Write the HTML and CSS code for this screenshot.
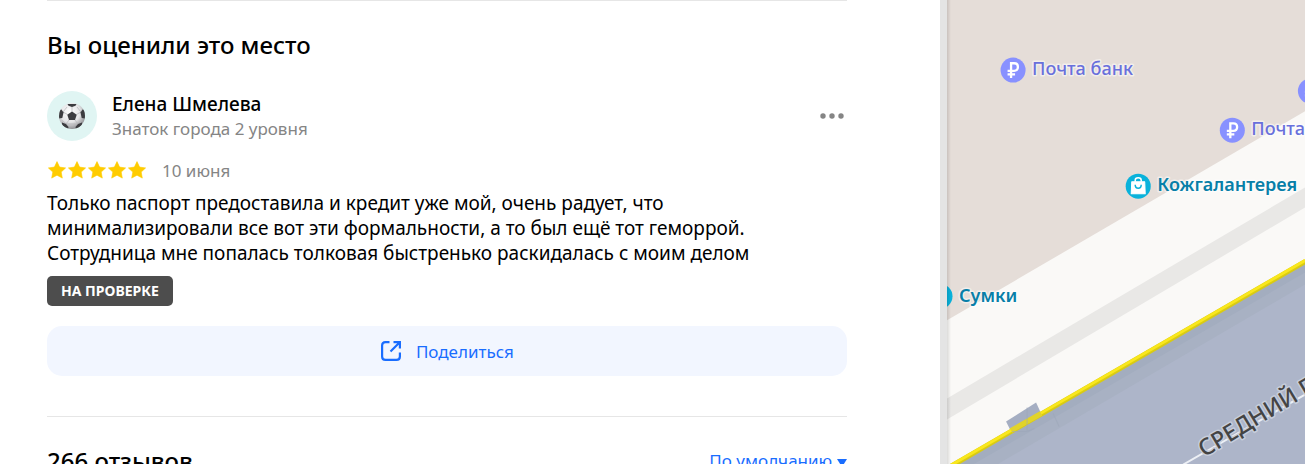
FILE: index.html
```html
<!DOCTYPE html>
<html lang="ru">
<head>
<meta charset="utf-8">
<meta name="viewport" content="width=device-width, initial-scale=1">
<title>Отзывы</title>
<link rel="stylesheet" href="styles.css">
</head>
<body>
<div class="app">
  <main class="panel">
    <section class="own-review">
      <h2 class="title">Вы оценили это место</h2>
      <header class="author">
        <svg class="avatar" viewBox="0 0 50 50" aria-hidden="true">
          <defs>
            <radialGradient id="ball" cx=".42" cy=".35" r=".65">
              <stop offset="0" stop-color="#fff"/>
              <stop offset=".6" stop-color="#e4e4e6"/>
              <stop offset="1" stop-color="#929296"/>
            </radialGradient>
            <clipPath id="ball-clip"><circle cx="25" cy="25" r="13"/></clipPath>
          </defs>
          <circle cx="25" cy="25" r="25" fill="#e0f5f3"/>
          <circle cx="25" cy="25" r="13" fill="url(#ball)"/>
          <g clip-path="url(#ball-clip)">
            <g stroke="#b4b4b8" stroke-width=".7" fill="none">
              <path d="M25 20.500V15M29.500 23.500L34 21M28 29L31 33M22 29L19 33M20.500 23.500L16 21M19 33H31M16 21L20 16M34 21L30 16M14.500 29L19 33M35.500 29L31 33"/>
            </g>
            <g fill="#3c3c40">
              <path d="M25 20.500L29.700 23.700L28 29H22L20.300 23.700Z"/>
              <path d="M20.500 13L29.500 13L28.500 14.800L25 16L21.500 14.800Z"/>
              <path d="M11 19L14.500 18.500L16.500 21.500L15.300 27L11.500 27.500Z"/>
              <path d="M39 19L35.500 18.500L33.500 21.500L34.700 27L38.500 27.500Z"/>
              <path d="M15 31.500L19 33L21.500 36L21 39L15 36Z"/>
              <path d="M35 31.500L31 33L28.500 36L29 39L35 36Z"/>
            </g>
          </g>
        </svg>
        <div class="author-info">
          <div class="author-name">Елена Шмелева</div>
          <div class="author-level">Знаток города 2 уровня</div>
        </div>
        <button class="more" type="button" aria-label="Ещё">
          <svg width="24" height="6" viewBox="0 0 24 6" fill="#858585"><circle cx="3" cy="3" r="2.700"/><circle cx="12" cy="3" r="2.700"/><circle cx="21" cy="3" r="2.700"/></svg>
        </button>
      </header>
      <div class="rating">
        <svg class="stars" width="100" height="20" viewBox="0 0 100 20" role="img" aria-label="5 из 5">
          <defs><path id="star" d="M10 1.600L12.600 7.100L18.600 7.900L14.200 12.100L15.300 18.100L10 15.200L4.700 18.100L5.800 12.100L1.400 7.900L7.400 7.100Z"/></defs>
          <g fill="#fc0" stroke="#fc0" stroke-width=".6" stroke-linejoin="round"><use href="#star"/><use href="#star" x="20"/><use href="#star" x="40"/><use href="#star" x="60"/><use href="#star" x="80"/></g>
        </svg>
        <time class="date">10 июня</time>
      </div>
      <p class="text">Только паспорт предоставила и кредит уже мой, очень радует, что<br>минимализировали все вот эти формальности, а то был ещё тот геморрой.<br>Сотрудница мне попалась толковая быстренько раскидалась с моим делом</p>
      <span class="status">НА ПРОВЕРКЕ</span>
      <button class="share" type="button">
        <svg width="22" height="22" viewBox="0 0 22 22" fill="none" stroke="#196dff" stroke-width="2.200" aria-hidden="true"><path d="M9.500 2.200H5.500Q2.100 2.200 2.100 5.600V16.500Q2.100 19.900 5.500 19.900H16.500Q19.900 19.900 19.900 16.500V12.500"/><path d="M10.500 11.500L19.500 2.500M13.500 2.200H19.900V8.500"/></svg>
        <span>Поделиться</span>
      </button>
    </section>
    <section class="reviews">
      <h2 class="title">266 отзывов</h2>
      <button class="sort" type="button">По умолчанию <svg width="10" height="8" viewBox="0 0 10 8" aria-hidden="true"><path d="M0 0H10L5 8Z" fill="#196dff"/></svg></button>
    </section>
  </main>
  <div class="scrollbar"></div>
  <aside class="map">
    <svg class="map-canvas" viewBox="0 0 358 464" preserveAspectRatio="xMinYMin slice" role="img" aria-label="Карта">
      <defs>
        <g id="ruble">
          <circle r="12.500" fill="#8891ff"/>
          <path d="M-2 8V-6.800H1Q4.800 -6.800 4.800 -3.200Q4.800 .7 1 .7H-5.500M-5.500 4.200H2" fill="none" stroke="#fff" stroke-width="2.300"/>
        </g>
      </defs>
      <rect width="358" height="464" fill="#faf9f7"/>
      <path d="M0 0H358V111L0 320Z" fill="#e5ddd8"/>
      <path d="M0 398L358 187V207L0 419Z" fill="#e9e8e6"/>
      <path d="M0 467L358 260V464H0Z" fill="#adb5c9"/>
      <path d="M0 467L358 260V284L50 464H5Z" fill="#a8b1c3"/>
      <path d="M0 467L358 260V272L26 464H5Z" fill="#a3adbf"/>
      <path d="M59 421L89 402L94 413L64 431Z" fill="#a5aec2"/>
      <path d="M0 468L358 261" stroke="#d9cb13" stroke-width="5"/>
      <path d="M0 467L358 260" stroke="#f9e71c" stroke-width="3"/>
      <path d="M64 430L94 413" stroke="#e1d32a" stroke-width="5"/>
      <path d="M80 407V431H65M80 431L87 428M106 413L112 426" fill="none" stroke="#9da6b9" stroke-width="1" opacity=".6"/>
      <path d="M236 464L358 394" stroke="#edf0f5" stroke-width="2"/>
      <use href="#ruble" x="66" y="70"/>
      <use href="#ruble" x="285" y="130"/>
      <use href="#ruble" x="363" y="91"/>
      <g transform="translate(191 186)">
        <circle r="12.500" fill="#09b2db"/>
        <path d="M-6.500 -4.500H6.500L7 7.500H-7Z" fill="#fff" stroke="#fff" stroke-linejoin="round"/>
        <path d="M-3 -4.500V-6Q-3 -8.500 0 -8.500Q3 -8.500 3 -6V-4.500" fill="none" stroke="#fff" stroke-width="1.500"/>
        <path d="M-3 -1.500Q-3 2 0 2Q3 2 3 -1.500" fill="none" stroke="#09b2db" stroke-width="1.500"/>
      </g>
      <circle cx="-7" cy="296" r="12.500" fill="#09b2db"/>
      <g class="place">
        <text class="bank" x="85" y="75">Почта банк</text>
        <text class="bank" x="304" y="135">Почта</text>
        <text class="shop" x="210" y="191">Кожгалантерея</text>
        <text class="shop" x="12" y="302">Сумки</text>
      </g>
      <text class="street" transform="translate(257 457) rotate(-31)">СРЕДНИЙ П</text>
    </svg>
  </aside>
</div>
</body>
</html>
```
FILE: styles.css
```css
* {
  box-sizing: border-box;
}

body {
  margin: 0;
  background: #fff;
  color: #000;
  font-family: "Noto Sans", "Open Sans", sans-serif;
}

.app {
  display: flex;
  height: 100vh;
  overflow: hidden;
}

.panel {
  flex: 0 0 72%;
  padding: 0 93px 0 47px;
}

.own-review,
.reviews {
  border-top: 1px solid #e6e6e6;
}

.own-review {
  padding: 28px 0 40px;
}

.title {
  margin: 0;
  font-size: 24px;
  font-weight: 500;
  line-height: 32px;
}

.author {
  display: flex;
  align-items: center;
  gap: 15px;
  margin-top: 30px;
}

.avatar {
  width: 50px;
  height: 50px;
}

.author-info {
  flex: 1;
}

.author-name {
  font-size: 19px;
  font-weight: 500;
  line-height: 26px;
}

.author-level {
  color: #858585;
  font-size: 17px;
  line-height: 24px;
}

button {
  padding: 0;
  border: 0;
  background: none;
  font-family: inherit;
  cursor: pointer;
}

.more {
  display: flex;
  padding: 10px 3px;
}

.rating {
  display: flex;
  align-items: center;
  gap: 15px;
  height: 24px;
  margin-top: 17px;
}

.date {
  color: #858585;
  font-size: 17px;
}

.text {
  margin: 9px 0 0;
  font-size: 19px;
  line-height: 25px;
}

.status {
  display: block;
  width: fit-content;
  margin-top: 10px;
  padding: 0 14px;
  border-radius: 5px;
  background: #4d4d4d;
  color: #fff;
  font-size: 14px;
  font-weight: 700;
  line-height: 30px;
}

.share {
  display: flex;
  align-items: center;
  justify-content: center;
  gap: 14px;
  width: 100%;
  height: 50px;
  margin-top: 20px;
  border-radius: 15px;
  background: #f2f6ff;
  color: #196dff;
  font-size: 17px;
}

.reviews {
  display: flex;
  align-items: center;
  justify-content: space-between;
  padding-top: 28px;
}

.sort {
  color: #196dff;
  font-size: 17px;
  line-height: 32px;
}

.scrollbar {
  flex: 0 0 7px;
  background: #e4e4e4;
}

.map {
  flex: 1;
  min-width: 0;
  position: relative;
}

.map::before {
  content: "";
  position: absolute;
  inset: 0 auto 0 0;
  width: 4px;
  background: linear-gradient(to right, rgba(0, 0, 0, 0.12), transparent);
}

.map-canvas {
  display: block;
  width: 100%;
  height: 100%;
}

.place {
  font-size: 18px;
  font-weight: 500;
  paint-order: stroke;
  stroke: rgba(255, 255, 255, 0.5);
  stroke-width: 3px;
  stroke-linejoin: round;
}

.bank {
  fill: #6970dc;
}

.shop {
  fill: #087fa8;
  font-weight: 600;
}

.street {
  fill: #444;
  font-size: 23px;
  font-weight: 500;
  paint-order: stroke;
  stroke: #c6cddb;
  stroke-width: 3px;
  stroke-linejoin: round;
}
```
